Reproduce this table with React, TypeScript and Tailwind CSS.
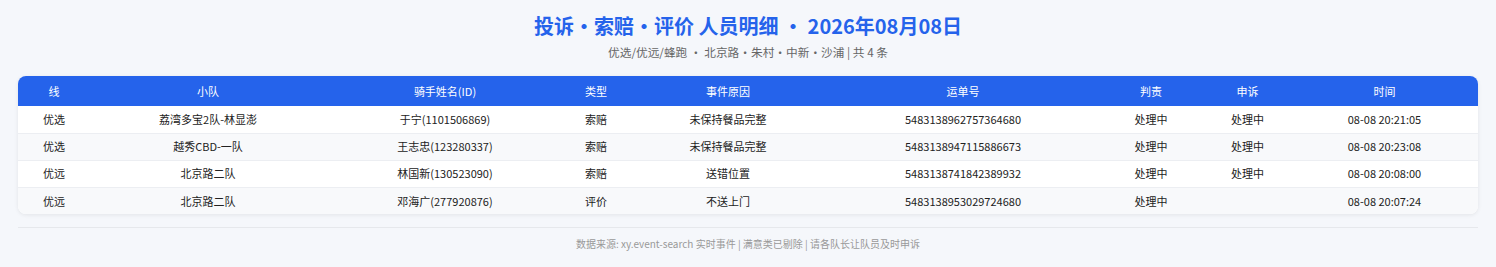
import React from 'react';

interface Row {
    line: string;
    team: string;
    rider: string;
    kind: string;
    reason: string;
    waybill: string;
    judge: string;
    appeal: string;
    time: string;
}

const rows: Row[] = [
    { line: '优选', team: '荔湾多宝2队-林显澎', rider: '于宁(1101506869)', kind: '索赔', reason: '未保持餐品完整', waybill: '5483138962757364680', judge: '处理中', appeal: '处理中', time: '08-08 20:21:05' },
    { line: '优选', team: '越秀CBD-一队', rider: '王志忠(123280337)', kind: '索赔', reason: '未保持餐品完整', waybill: '5483138947115886673', judge: '处理中', appeal: '处理中', time: '08-08 20:23:08' },
    { line: '优远', team: '北京路二队', rider: '林国新(130523090)', kind: '索赔', reason: '送错位置', waybill: '5483138741842389932', judge: '处理中', appeal: '处理中', time: '08-08 20:08:00' },
    { line: '优远', team: '北京路二队', rider: '邓海广(277920876)', kind: '评价', reason: '不送上门', waybill: '5483138953029724680', judge: '处理中', appeal: '', time: '08-08 20:07:24' },
];

const headers = ['线', '小队', '骑手姓名(ID)', '类型', '事件原因', '运单号', '判责', '申诉', '时间'];
const widths = ['w-[72px]', 'w-[236px]', 'w-[238px]', 'w-[64px]', 'w-[200px]', 'w-[270px]', 'w-[106px]', 'w-[87px]', 'w-[187px]'];

const App: React.FC = () => {
    return (
        <div className="min-h-[267px] bg-[#f5f7fb] px-[18px] pt-[11px] font-['Noto_Sans_CJK_SC','Noto_Sans',sans-serif]">
            <h1 className="text-center text-[20px] font-bold leading-[30px] text-[#2563eb]">
                投诉·索赔·评价 人员明细 · 2026年08月08日
            </h1>
            <p className="mt-[1px] text-center text-[11.7px] leading-[20px] text-[#666]">
                优选/优远/蜂跑 · 北京路·朱村·中新·沙浦 | 共 4 条
            </p>

            {/* Table */}
            <div className="mt-[14px] overflow-hidden rounded-lg bg-white shadow-[0_1px_4px_rgba(0,0,0,0.08)]">
                <table className="w-full table-fixed border-collapse text-[11px] text-[#222]">
                    <thead>
                        <tr className="h-[30px] bg-[#2563eb] text-white">
                            {headers.map((h, i) => (
                                <th key={h} className={`${widths[i]} text-center font-normal`}>{h}</th>
                            ))}
                        </tr>
                    </thead>
                    <tbody>
                        {rows.map((r, i) => (
                            <tr key={r.waybill} className={`h-[27px] ${i % 2 === 1 ? 'bg-[#f8f9fb]' : 'bg-white'} ${i < rows.length - 1 ? 'border-b border-[#eceef2]' : ''}`}>
                                <td className="text-center">{r.line}</td>
                                <td className="text-center">{r.team}</td>
                                <td className="text-center">{r.rider}</td>
                                <td className="text-center">{r.kind}</td>
                                <td className="text-center">{r.reason}</td>
                                <td className="text-center">{r.waybill}</td>
                                <td className="text-center">{r.judge}</td>
                                <td className="text-center">{r.appeal}</td>
                                <td className="text-center">{r.time}</td>
                            </tr>
                        ))}
                    </tbody>
                </table>
            </div>

            <div className="mt-[13px] border-t border-[#e6e8ec] pt-[8px] text-center text-[10px] leading-[16px] text-[#999]">
                数据来源: xy.event-search 实时事件 | 满意类已剔除 | 请各队长让队员及时申诉
            </div>
        </div>
    );
};

export default App;
